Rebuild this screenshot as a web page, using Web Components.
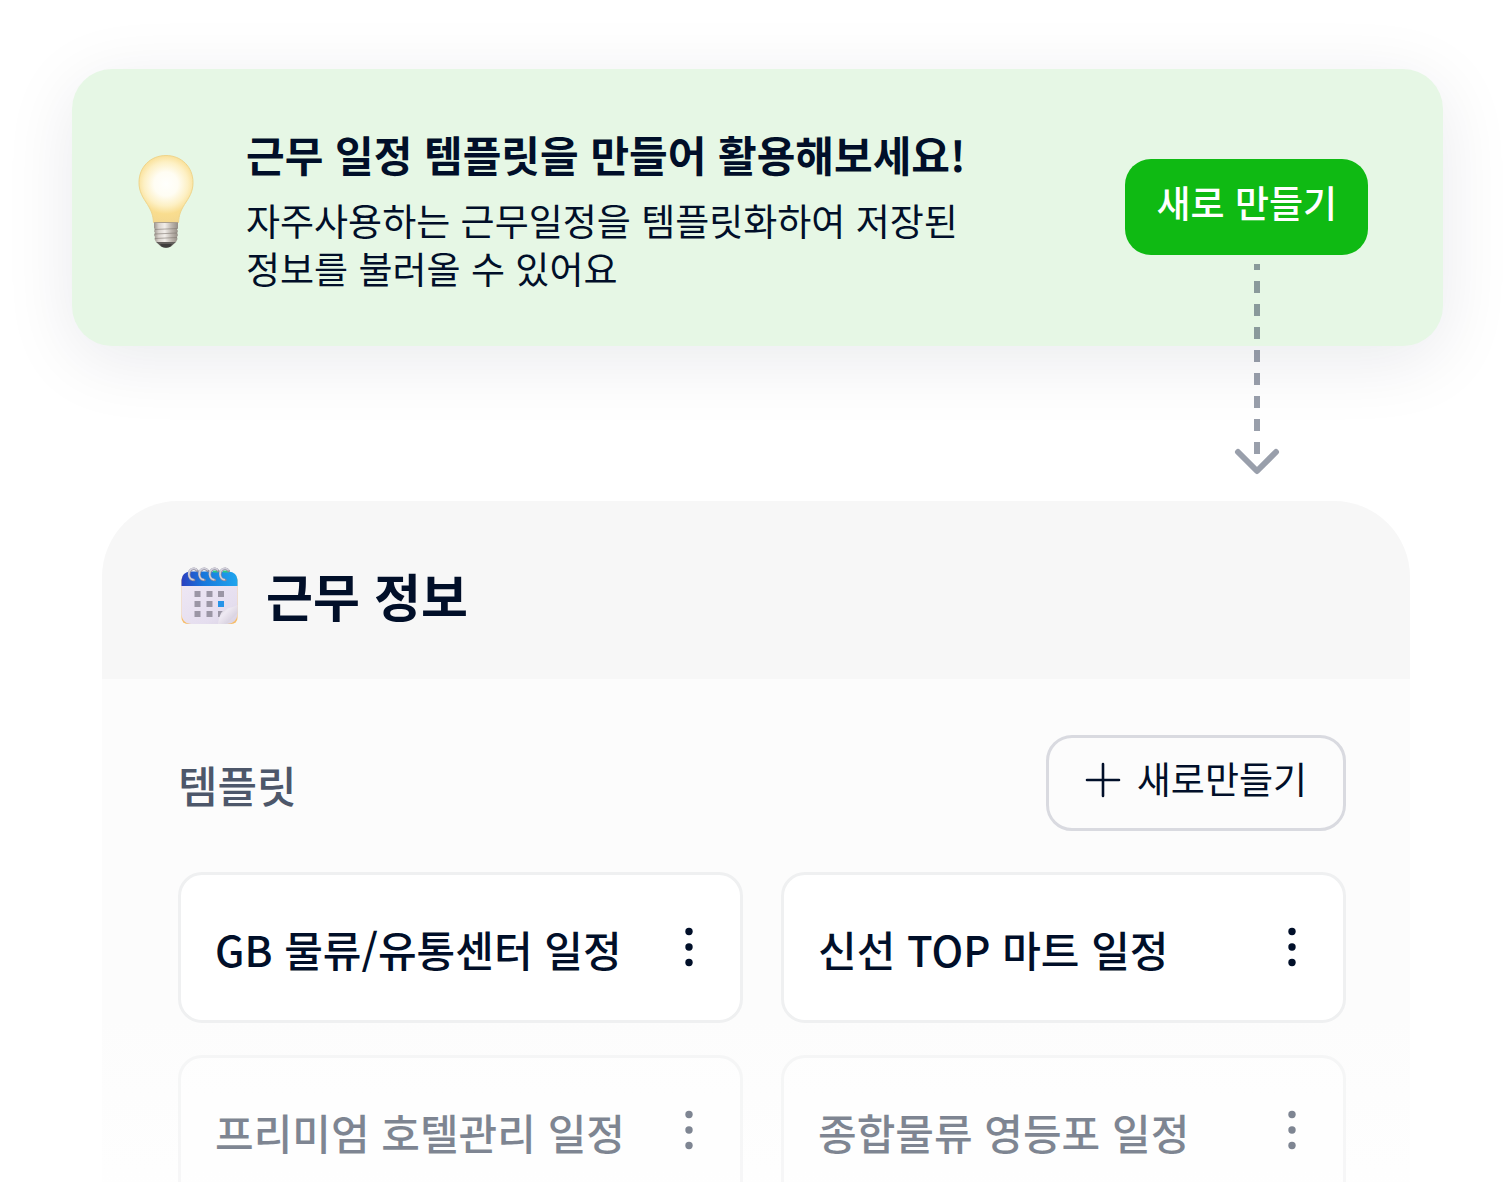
<!DOCTYPE html>
<html lang="ko">
<head>
<meta charset="utf-8">
<meta name="viewport" content="width=device-width, initial-scale=1">
<title>근무 정보</title>
<style>
    :root {
        --ink: #010f29;
        --ink-soft: #4d576a;
        --arrow: #000f2e66;
        --green: #0fba13;
        --green-soft: #e6f7e5;
        --line: #eff0f1;
        --line-strong: #d9dae0;
    }

    body {
        margin: 0;
        height: 100vh;
        overflow: hidden;
        background: #fff;
        color: var(--ink);
        font-family: "Noto Sans CJK KR", sans-serif;
        font-size: 37px;
    }
</style>
</head>
<body>

<template id="wc-button">
    <style>
        :host {
            display: block;
            flex: none;
        }

        button {
            display: flex;
            align-items: center;
            gap: 16px;
            margin: 0;
            padding: 16px 31px 26px;
            border: 0;
            border-radius: 26px;
            background: var(--green);
            color: #fff;
            font: inherit;
            font-weight: 500;
            line-height: 54px;
            white-space: nowrap;
            cursor: pointer;
        }

        :host([outline]) button {
            padding: 14px 36px 24px;
            border: 3px solid var(--line-strong);
            background: transparent;
            color: var(--ink);
            font-weight: 400;
            line-height: 52px;
        }

        ::slotted(svg) {
            display: block;
        }
    </style>
    <button type="button"><slot name="icon"></slot><slot></slot></button>
</template>

<template id="wc-banner">
    <style>
        :host {
            display: block;
        }

        section {
            display: flex;
            align-items: center;
            box-sizing: border-box;
            min-height: 277px;
            padding: 52px 75px 54px 65px;
            border-radius: 40px;
            background: var(--green-soft);
            box-shadow: 0 14px 72px rgba(16, 24, 56, 0.09);
        }

        .bulb {
            flex: none;
            width: 58px;
            height: 106px;
            margin-right: 51px;
        }

        .text {
            flex: 1;
            padding-top: 3px;
        }

        h2, p {
            margin: 0;
        }

        h2 {
            margin-bottom: 12px;
            font-size: 42px;
            font-weight: 700;
            line-height: 60px;
        }

        p {
            max-width: 740px;
            line-height: 48px;
        }

        .action {
            position: relative;
            flex: none;
        }

        /* hangs below the button, over the edge of the banner */
        .arrow {
            position: absolute;
            top: calc(100% + 9px);
            right: 88px;
            width: 46px;
            height: 212px;
            pointer-events: none;
        }
    </style>
    <section>
        <svg class="bulb" viewBox="0 0 58 106" aria-hidden="true">
            <defs>
                <radialGradient id="glass" cx="29" cy="30" r="40" gradientUnits="userSpaceOnUse">
                    <stop offset="0" stop-color="#fffffd"/>
                    <stop offset="0.3" stop-color="#fffdf3"/>
                    <stop offset="0.55" stop-color="#fdf0c4"/>
                    <stop offset="0.75" stop-color="#f9dd8f"/>
                    <stop offset="1" stop-color="#f3d78e"/>
                </radialGradient>
                <linearGradient id="metal" x1="0" x2="1" y1="0" y2="0">
                    <stop offset="0" stop-color="#9a938b"/>
                    <stop offset="0.2" stop-color="#d9d3cd"/>
                    <stop offset="0.45" stop-color="#f1ede9"/>
                    <stop offset="0.75" stop-color="#bab3ab"/>
                    <stop offset="1" stop-color="#958e86"/>
                </linearGradient>
            </defs>
            <path d="M29 1.5C13.500 1.500 2 13 2 28.500C2 38 6 43.500 10.500 50.500C14.500 57 16 61 16.500 68.500H41.500C42 61 43.500 57 47.500 50.500C52 43.500 56 38 56 28.500C56 13 44.500 1.500 29 1.500Z" fill="url(#glass)" stroke="#efd58c" stroke-width="1"/>
            <path d="M17 68H41V74L40 75.500L41 77L40 79L41 81L40 83L40.500 85L39 88H19L17.500 85L18 83L17 81L18 79L17 77L18 75.500L17 74Z" fill="url(#metal)"/>
            <path d="M17 68.500H41" stroke="#aca08c" stroke-width="1"/>
            <path d="M17.500 75.500L40.500 74.500M17.500 80L40.500 79M18 84.500L40 83.500" stroke="#837b74" stroke-width="1.200" opacity="0.6"/>
            <path d="M19 88H39L34 92.500Q29 94.500 24 92.500Z" fill="#625e5b"/>
            <path d="M23 90H35L33 93Q29 94.500 25 93Z" fill="#3f3d3c"/>
        </svg>
        <div class="text">
            <h2><slot name="title"></slot></h2>
            <p><slot></slot></p>
        </div>
        <div class="action">
            <slot name="action"></slot>
            <svg class="arrow" viewBox="0 0 46 212" fill="none" stroke="var(--arrow)" stroke-width="6" aria-hidden="true">
                <path d="M23 190V0" stroke-dasharray="12 11"/>
                <path d="M4 188L23 207L42 188" stroke-linecap="round" stroke-linejoin="round"/>
            </svg>
        </div>
    </section>
</template>

<template id="wc-panel">
    <style>
        :host {
            display: block;
        }

        header {
            display: flex;
            align-items: center;
            gap: 26px;
            box-sizing: border-box;
            min-height: 178px;
            padding: 10px 64px 0 78px;
            border-radius: 76px 76px 0 0;
            background: #f7f7f7;
        }

        header svg {
            flex: none;
            width: 60px;
            height: 60px;
        }

        h1 {
            margin: 0;
            font-size: 51px;
            font-weight: 700;
            line-height: 72px;
        }

        .body {
            padding: 56px 64px 40px 76px;
            background: linear-gradient(#fcfcfc 60%, #fff);
        }

        .bar {
            display: flex;
            align-items: center;
            justify-content: space-between;
            margin-bottom: 41px;
        }

        h2 {
            margin: 0;
            padding-top: 2px;
            color: var(--ink-soft);
            font-size: 43px;
            font-weight: 500;
            line-height: 60px;
        }

        .grid {
            display: grid;
            grid-template-columns: 1fr 1fr;
            gap: 32px 38px;
        }
    </style>
    <header>
        <svg viewBox="0 -2 60 60" aria-hidden="true">
            <defs>
                <linearGradient id="top" x1="0" x2="1" y1="0" y2="0">
                    <stop offset="0" stop-color="#2b3fc0"/>
                    <stop offset="0.4" stop-color="#1878dc"/>
                    <stop offset="1" stop-color="#1fa5ee"/>
                </linearGradient>
                <linearGradient id="sheet" x1="0" x2="1" y1="0" y2="1">
                    <stop offset="0" stop-color="#eee7f4"/>
                    <stop offset="0.7" stop-color="#e5deef"/>
                    <stop offset="1" stop-color="#d9d2e2"/>
                </linearGradient>
                <linearGradient id="curl" x1="38" x2="54" y1="38" y2="54" gradientUnits="userSpaceOnUse">
                    <stop offset="0.150" stop-color="#c9c2d2"/>
                    <stop offset="0.450" stop-color="#efeaf3"/>
                    <stop offset="1" stop-color="#d3ccdb"/>
                </linearGradient>
            </defs>
            <rect x="1.500" y="7" width="56" height="50" rx="6" fill="#f7bd69"/>
            <path d="M1.500 18H57.500V47Q57 56.500 47 57H11Q2 56.500 1.500 47Z" fill="url(#sheet)"/>
            <path d="M1.500 19V13Q2 5 10.500 4.500H48.500Q57 5 57.500 13V19Z" fill="url(#top)"/>
            <path d="M33 4.500H38M43 4.500H49" stroke="#2fcb87" stroke-width="2"/>
            <g fill="none" stroke-linecap="round">
                <g stroke="#8e8b9c" stroke-width="2.600">
                    <path id="ring" d="M17.500 4C14.500 -0.500 9 2.500 9 7.500Q9.500 13 14 13"/>
                    <use href="#ring" x="10.400"/>
                    <use href="#ring" x="20.800"/>
                    <use href="#ring" x="31.200"/>
                </g>
                <g stroke="#d2d0db" stroke-width="1.600">
                    <path id="shine" d="M17 2.800C13.500 -0.500 8.500 2.500 8.800 7.500Q9.300 12 13 12.600"/>
                    <use href="#shine" x="10.400"/>
                    <use href="#shine" x="20.800"/>
                    <use href="#shine" x="31.200"/>
                </g>
            </g>
            <path d="M14.500 24h6v6h-6zM26.500 24h6v6h-6zM38 24h6v6h-6zM14.500 34h6v6h-6zM26.500 34h6v6h-6zM14.500 44h6v6h-6zM26.500 44h6v6h-6zM38 44h6v6h-6z" fill="#9b96a5"/>
            <path d="M38 34h6v6h-6z" fill="#2794e8"/>
            <path d="M38 57Q38.500 51 41 46Q43 42.500 47 41.500Q53 40.500 57.500 38V46L46.500 57Z" fill="url(#curl)"/>
        </svg>
        <h1><slot name="title"></slot></h1>
    </header>
    <div class="body">
        <div class="bar">
            <h2><slot name="subtitle"></slot></h2>
            <slot name="action"></slot>
        </div>
        <div class="grid"><slot></slot></div>
    </div>
</template>

<template id="wc-card">
    <style>
        :host {
            display: flex;
            align-items: center;
            justify-content: space-between;
            box-sizing: border-box;
            min-height: 151px;
            padding: 0 39px 0 34px;
            border: 3px solid var(--line);
            border-radius: 24px;
            background: #fff;
        }

        :host([faded]) {
            opacity: 0.5;
        }

        h3 {
            margin: 0;
            padding-top: 2px;
            font-size: 42px;
            font-weight: 500;
            line-height: 60px;
            white-space: nowrap;
        }

        button {
            flex: none;
            padding: 0;
            border: 0;
            background: none;
            color: inherit;
            cursor: pointer;
        }

        svg {
            display: block;
            width: 24px;
            height: 48px;
        }
    </style>
    <h3><slot></slot></h3>
    <button type="button" aria-label="더보기">
        <svg viewBox="0 0 24 48" fill="currentColor" aria-hidden="true">
            <circle cx="12" cy="7.500" r="3.700"/>
            <circle cx="12" cy="23" r="3.700"/>
            <circle cx="12" cy="38.500" r="3.700"/>
        </svg>
    </button>
</template>

<template id="wc-page">
    <style>
        :host {
            display: flex;
            flex-direction: column;
            gap: 155px;
            padding-top: 69px;
        }

        ::slotted(wc-banner) {
            margin: 0 69px 0 72px;
        }

        ::slotted(wc-panel) {
            margin: 0 102px;
        }
    </style>
    <slot></slot>
</template>

<wc-page>
    <wc-banner>
        <span slot="title">근무 일정 템플릿을 만들어 활용해보세요!</span>
        자주사용하는 근무일정을 템플릿화하여 저장된<br>정보를 불러올 수 있어요
        <wc-button slot="action">새로 만들기</wc-button>
    </wc-banner>

    <wc-panel>
        <span slot="title">근무 정보</span>
        <span slot="subtitle">템플릿</span>
        <wc-button slot="action" outline>
            <svg slot="icon" width="36" height="40" viewBox="0 0 36 40" fill="none" stroke="currentColor" stroke-width="2.600" stroke-linecap="round" aria-hidden="true"><path d="M2 22H34M18 6V38"/></svg>새로만들기</wc-button>
        <wc-card>GB 물류/유통센터 일정</wc-card>
        <wc-card>신선 TOP 마트 일정</wc-card>
        <wc-card faded>프리미엄 호텔관리 일정</wc-card>
        <wc-card faded>종합물류 영등포 일정</wc-card>
    </wc-panel>
</wc-page>

<script>
    // every element here is only markup, so they share one base class
    class TemplateElement extends HTMLElement {
        constructor() {
            super();

            const template   = document.getElementById(this.localName);
            const shadowRoot = this.attachShadow({mode: 'open'});
            shadowRoot.appendChild(template.content.cloneNode(true));
        }
    }

    class WcPage extends TemplateElement {}
    class WcBanner extends TemplateElement {}
    class WcPanel extends TemplateElement {}
    class WcCard extends TemplateElement {}
    class WcButton extends TemplateElement {}

    window.customElements.define('wc-page', WcPage);
    window.customElements.define('wc-banner', WcBanner);
    window.customElements.define('wc-panel', WcPanel);
    window.customElements.define('wc-card', WcCard);
    window.customElements.define('wc-button', WcButton);
</script>
</body>
</html>
